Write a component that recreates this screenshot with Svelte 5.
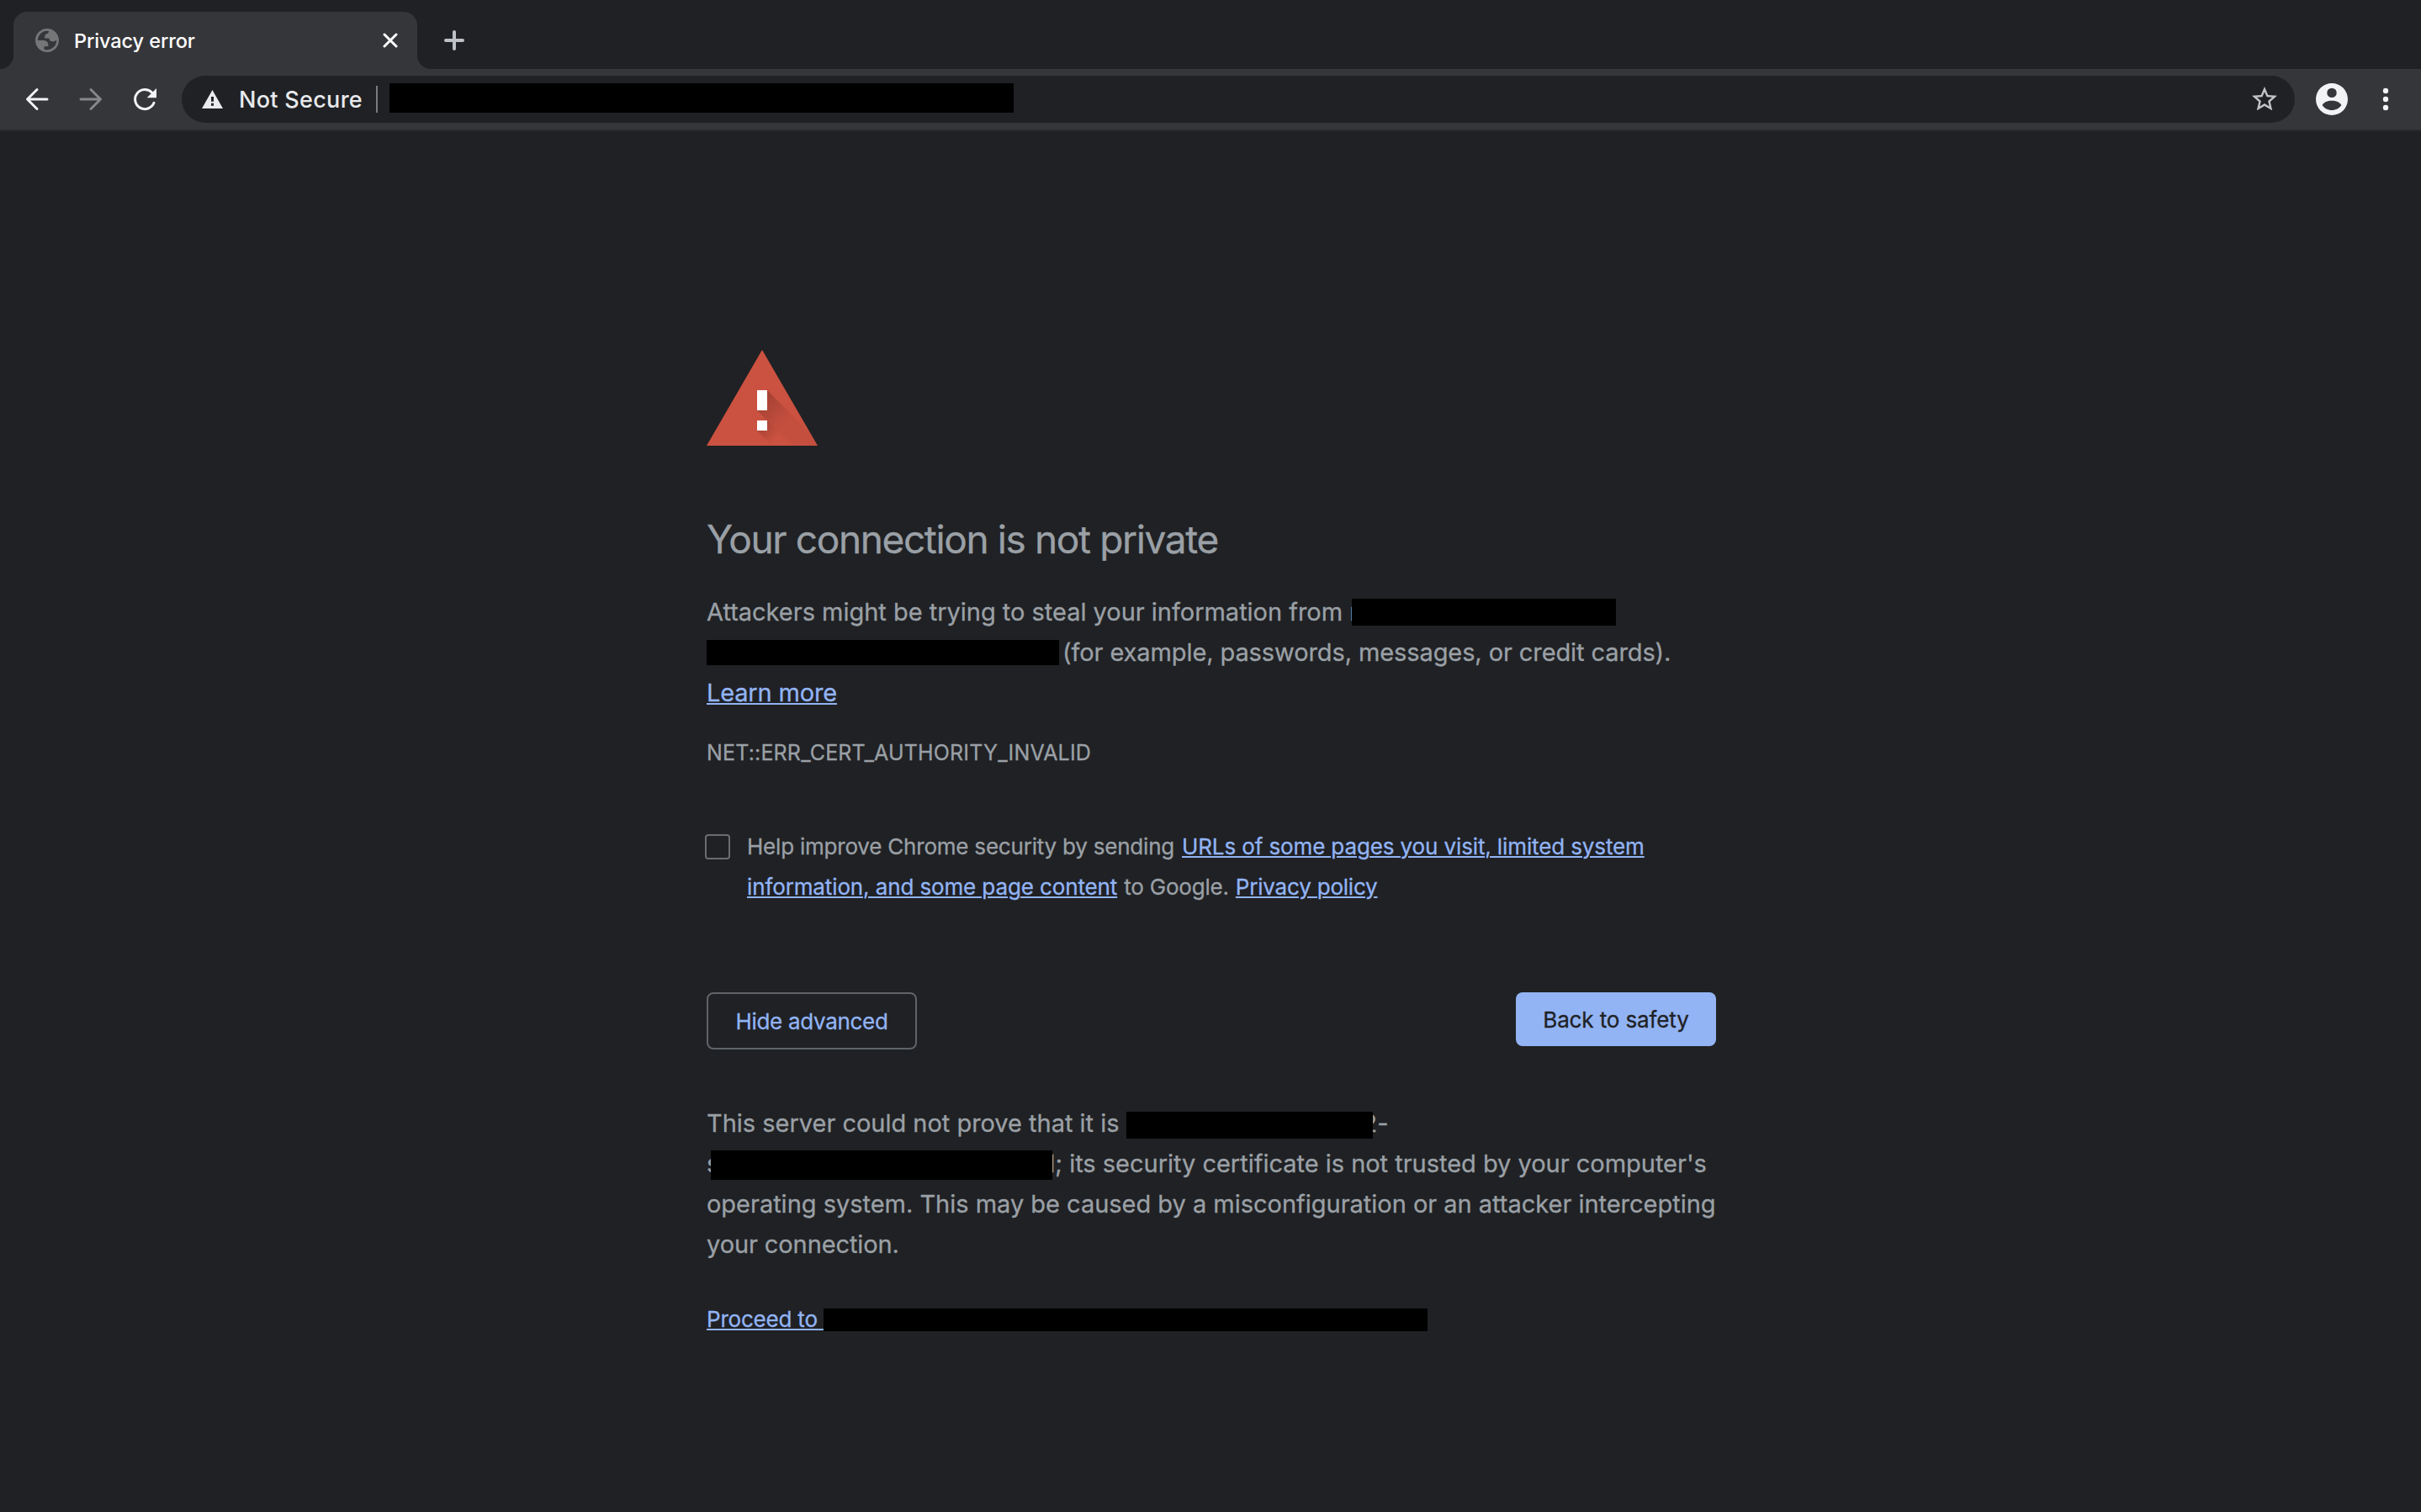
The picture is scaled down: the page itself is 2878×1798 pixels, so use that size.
<script>
    let showAdvanced = true
    let optIn = false

    const toggleAdvanced = () => {
        showAdvanced = !showAdvanced
    }

    const toggleOptIn = () => {
        optIn = !optIn
    }
</script>

<div class="browser">
    <div class="tab-strip">
        <div class="tab">
            <svg class="favicon" viewBox="2 2 20 20">
                <path fill-rule="evenodd" d="M12 2C6.48 2 2 6.48 2 12s4.48 10 10 10 10-4.48 10-10S17.52 2 12 2zM4 12h4.4c3.407.022 4.922 1.73 4.543 5.127H9.488v2.47a8.004 8.004 0 0 0 10.498-8.083C19.327 12.504 18.332 13 17 13c-2.137 0-3.206-.916-3.206-2.75h-3.748c-.274-2.728.683-4.092 2.87-4.092 0-.975.327-1.597.811-1.97A8.004 8.004 0 0 0 4 12z" />
            </svg>
            <span class="tab-title">Privacy error</span>
            <svg class="close" viewBox="0 0 18 18">
                <path d="M2 2l14 14M16 2L2 16" />
            </svg>
        </div>
        <svg class="new-tab" viewBox="0 0 24 24">
            <path d="M12 2v20M2 12h20" />
        </svg>
    </div>

    <div class="toolbar">
        <svg class="nav" viewBox="0 0 28 28">
            <path d="M26 14H2.8M14 2.5L2.5 14 14 25.5" />
        </svg>
        <svg class="nav forward" viewBox="0 0 28 28">
            <path d="M2 14h23.2M14 2.5L25.5 14 14 25.5" />
        </svg>
        <svg class="nav reload" viewBox="0 0 28 28">
            <path d="M25 18.3A11.6 11.6 0 1 1 22.6 6" />
            <path class="solid" d="M28 1v11.3H16.7z" />
        </svg>
        <div class="omnibox">
            <svg class="insecure" viewBox="0 0 25 22">
                <path fill-rule="evenodd" d="M12.5 0L25 22H0zM11 8v5.7h3V8zM11 15.7v3h3v-3z" />
            </svg>
            <span class="security">Not Secure</span>
            <span class="divider"></span>
            <span class="redacted url"></span>
            <svg class="star" viewBox="2 2 20 19">
                <path d="M22 9.24l-7.19-.62L12 2 9.19 8.63 2 9.24l5.46 4.73L5.82 21 12 17.27 18.18 21l-1.63-7.03L22 9.24zM12 15.4l-3.76 2.27 1-4.28-3.32-2.88 4.38-.38L12 6.1l1.71 4.04 4.38.38-3.32 2.88 1 4.28L12 15.4z" />
            </svg>
        </div>
        <svg class="account" viewBox="0 0 38 38">
            <path fill-rule="evenodd" d="M19 0a19 19 0 1 0 0 38a19 19 0 1 0 0-38zM19 5.7a5.7 5.7 0 1 1 0 11.4a5.7 5.7 0 1 1 0-11.4zM7.6 26C9.5 22.5 14 20.8 19 20.8S28.5 22.5 30.4 26C28 29.8 23.8 32 19 32S10 29.8 7.6 26z" />
        </svg>
        <svg class="menu" viewBox="0 0 8 28">
            <circle cx="4" cy="4" r="3.2" />
            <circle cx="4" cy="14" r="3.2" />
            <circle cx="4" cy="24" r="3.2" />
        </svg>
    </div>

    <main>
        <svg class="warning" viewBox="0 0 132 114">
            <defs>
                <linearGradient id="bar-shadow" gradientUnits="userSpaceOnUse" x1="62" y1="58" x2="92" y2="88">
                    <stop offset="0" stop-opacity=".2" />
                    <stop offset="1" stop-opacity=".03" />
                </linearGradient>
                <linearGradient id="dot-shadow" gradientUnits="userSpaceOnUse" x1="64" y1="88" x2="82" y2="106">
                    <stop offset="0" stop-opacity=".18" />
                    <stop offset="1" stop-opacity="0" />
                </linearGradient>
                <clipPath id="triangle">
                    <path d="M66 0l66 114H0z" />
                </clipPath>
            </defs>
            <path fill="#cb5140" d="M66 0l66 114H0z" />
            <g clip-path="url(#triangle)">
                <path fill="url(#bar-shadow)" d="M72 48l66 66H102L60 72z" />
                <path fill="url(#dot-shadow)" d="M72 84l30 30H78L60 96z" />
            </g>
            <path fill="#fff" d="M60 48h12v24H60zM60 84h12v12H60z" />
        </svg>

        <h1>Your connection is not private</h1>

        <div class="text">
            <div class="line"><span>Attackers might be trying to steal your information from r</span><span class="redacted host-a"></span></div>
            <div class="line example"><span class="redacted host-b"></span><span>(for example, passwords, messages, or credit cards).</span></div>
            <div class="line learn"><a href="#learn">Learn more</a></div>
        </div>

        <div class="error-code">NET::ERR_CERT_AUTHORITY_INVALID</div>

        <div class="opt-in">
            <button class="checkbox" class:checked={optIn} aria-label="Help improve Chrome security" on:click={toggleOptIn}></button>
            <div>
                <div class="line help"><span>Help improve Chrome security by sending</span><a href="#urls">URLs of some pages you visit, limited system</a></div>
                <div class="line info"><a href="#urls">information, and some page content</a><span class="google">to Google.</span><a class="policy" href="#privacy">Privacy policy</a></div>
            </div>
        </div>

        <div class="buttons">
            <button class="secondary" on:click={toggleAdvanced}>{showAdvanced ? 'Hide advanced' : 'Advanced'}</button>
            <button class="primary">Back to safety</button>
        </div>

        {#if showAdvanced}
            <div class="details text">
                <div class="line"><span>This server could not prove that it is</span><span class="redacted host-c"></span><span>2-</span></div>
                <div class="line"><span>s</span><span class="redacted host-d"></span><span>l; its security certificate is not trusted by your computer's</span></div>
                <div class="line">operating system. This may be caused by a misconfiguration or an attacker intercepting</div>
                <div class="line last">your connection.</div>
            </div>
            <div class="line proceed"><a href="#proceed">Proceed to&nbsp;</a><span class="redacted host-e"></span></div>
        {/if}
    </main>
</div>

<style>
    :global(body) {
        background: #202124;
    }

    .browser {
        width: 2878px;
        height: 1798px;
        overflow: hidden;
        box-sizing: border-box;
        background: #202124;
        color: #9aa0a6;
        font-family: Inter, "Liberation Sans", sans-serif;
    }

    svg {
        display: block;
        flex: none;
    }

    button {
        padding: 0;
        font-family: inherit;
        box-sizing: border-box;
    }

    .tab-strip {
        display: flex;
        height: 82px;
        box-sizing: border-box;
        padding: 14px 0 0 16px;
    }

    .tab {
        position: relative;
        display: flex;
        align-items: center;
        width: 480px;
        height: 68px;
        box-sizing: border-box;
        padding: 0 23px 0 26px;
        border-radius: 16px 16px 0 0;
        background: #35363a;
    }

    /* the curved feet on both sides of the tab */
    .tab::before,
    .tab::after {
        content: '';
        position: absolute;
        bottom: 0;
        width: 16px;
        height: 16px;
    }

    .tab::before {
        left: -16px;
        background: radial-gradient(circle at 0 0, transparent 15.5px, #35363a 16.5px);
    }

    .tab::after {
        right: -16px;
        background: radial-gradient(circle at 100% 0, transparent 15.5px, #35363a 16.5px);
    }

    .favicon {
        width: 28px;
        height: 28px;
        fill: #757678;
    }

    .tab-title {
        flex: 1;
        margin-left: 18px;
        color: #fff;
        font-size: 23.5px;
        font-weight: 500;
        letter-spacing: -0.1px;
    }

    .close {
        width: 18px;
        height: 18px;
        stroke: #fff;
        stroke-width: 3;
        stroke-linecap: round;
    }

    .new-tab {
        width: 24px;
        height: 24px;
        margin: 22px 0 0 32px;
        stroke: #bdc1c6;
        stroke-width: 4;
        stroke-linecap: round;
    }

    .toolbar {
        display: flex;
        align-items: center;
        height: 74px;
        box-sizing: border-box;
        padding: 0 38px 0 30px;
        background: #35363a;
        border-bottom: 2px solid #292a2b;
    }

    .nav {
        width: 28px;
        height: 28px;
        margin-right: 36px;
        fill: none;
        stroke: #f1f3f4;
        stroke-width: 3;
        stroke-linecap: round;
        stroke-linejoin: round;
    }

    .nav.forward {
        stroke: #86878a;
    }

    .nav.reload {
        margin-right: 30px;
    }

    .solid {
        fill: #f1f3f4;
        stroke: none;
    }

    .omnibox {
        display: flex;
        align-items: center;
        width: 2512px;
        height: 56px;
        box-sizing: border-box;
        padding: 0 21px 0 24px;
        border-radius: 28px;
        background: #202124;
    }

    .insecure {
        width: 25px;
        height: 22px;
        fill: #e8eaed;
    }

    .security {
        width: 162px;
        margin-left: 19px;
        color: #e8eaed;
        font-size: 27px;
        font-weight: 500;
        letter-spacing: 0.3px;
        white-space: nowrap;
    }

    .divider {
        width: 2px;
        height: 32px;
        margin-left: 1px;
        background: #7b7c7f;
    }

    .redacted {
        flex: none;
        position: relative;
        background: #000;
    }

    .url {
        width: 742px;
        height: 35px;
        margin: -3px auto 0 14px;
    }

    .star {
        width: 30px;
        height: 28.5px;
        margin-top: -2px;
        fill: #c3c4c6;
    }

    .account {
        width: 38px;
        height: 38px;
        margin-left: 25px;
        fill: #f1f3f4;
    }

    .menu {
        width: 8px;
        height: 28px;
        margin-left: auto;
        fill: #f1f3f4;
    }

    main {
        width: 1200px;
        margin-left: 840px;
        padding-top: 260px;
        -webkit-text-stroke: 0.3px;
    }

    .warning {
        width: 132px;
        height: 114px;
    }

    h1 {
        margin: 83px 0 0;
        font-size: 46px;
        font-weight: 400;
        line-height: 56px;
        letter-spacing: -1.38px;
    }

    .text {
        margin-top: 35px;
        font-size: 29px;
        letter-spacing: -0.02px;
    }

    .line {
        display: flex;
        height: 48px;
        line-height: 48px;
        white-space: nowrap;
    }

    .example {
        letter-spacing: -0.1px;
    }

    .learn {
        letter-spacing: -0.17px;
    }

    .last {
        letter-spacing: -0.1px;
    }

    a {
        color: #92b4f4;
        text-decoration: underline;
        text-decoration-thickness: 2px;
        text-underline-offset: 2px;
    }

    .host-a {
        width: 314px;
        height: 32px;
        margin: 8px 0 0 -8px;
    }

    .host-b {
        width: 419px;
        height: 30px;
        margin: 9px 4px 0 0;
    }

    .host-c {
        width: 293px;
        height: 32px;
        margin: 10px -13px 0 9px;
    }

    .host-d {
        width: 406px;
        height: 35px;
        margin: 8px -4px 0 -10px;
    }

    .host-e {
        width: 718px;
        height: 27px;
        margin-top: 11px;
    }

    .error-code {
        margin-top: 23px;
        font-size: 25px;
        line-height: 48px;
        letter-spacing: 0.17px;
    }

    .opt-in {
        display: flex;
        gap: 20px;
        margin-top: 64px;
        font-size: 26px;
    }

    .checkbox {
        width: 30px;
        height: 30px;
        margin: 9px 0 0 -2px;
        border: 2px solid #6b6c6e;
        border-radius: 4px;
        background: transparent;
    }

    .checked {
        background: #92b4f4;
    }

    .help {
        gap: 9px;
        letter-spacing: -0.21px;
    }

    .help a,
    .info {
        letter-spacing: -0.12px;
    }

    .info {
        gap: 8px;
    }

    .google,
    .policy {
        letter-spacing: -0.2px;
    }

    .buttons {
        display: flex;
        justify-content: space-between;
        align-items: flex-start;
        margin-top: 101px;
    }

    .secondary,
    .primary {
        border-radius: 8px;
        font-size: 26px;
    }

    .secondary {
        width: 250px;
        height: 68px;
        border: 2px solid #5f6368;
        background: transparent;
        color: #92b4f4;
        letter-spacing: -0.3px;
    }

    .primary {
        width: 238px;
        height: 64px;
        border: none;
        background: #92b4f4;
        color: #202124;
        letter-spacing: -0.12px;
    }

    .details {
        margin-top: 64px;
    }

    .proceed {
        margin-top: 41px;
        font-size: 26px;
        letter-spacing: -0.2px;
    }
</style>
